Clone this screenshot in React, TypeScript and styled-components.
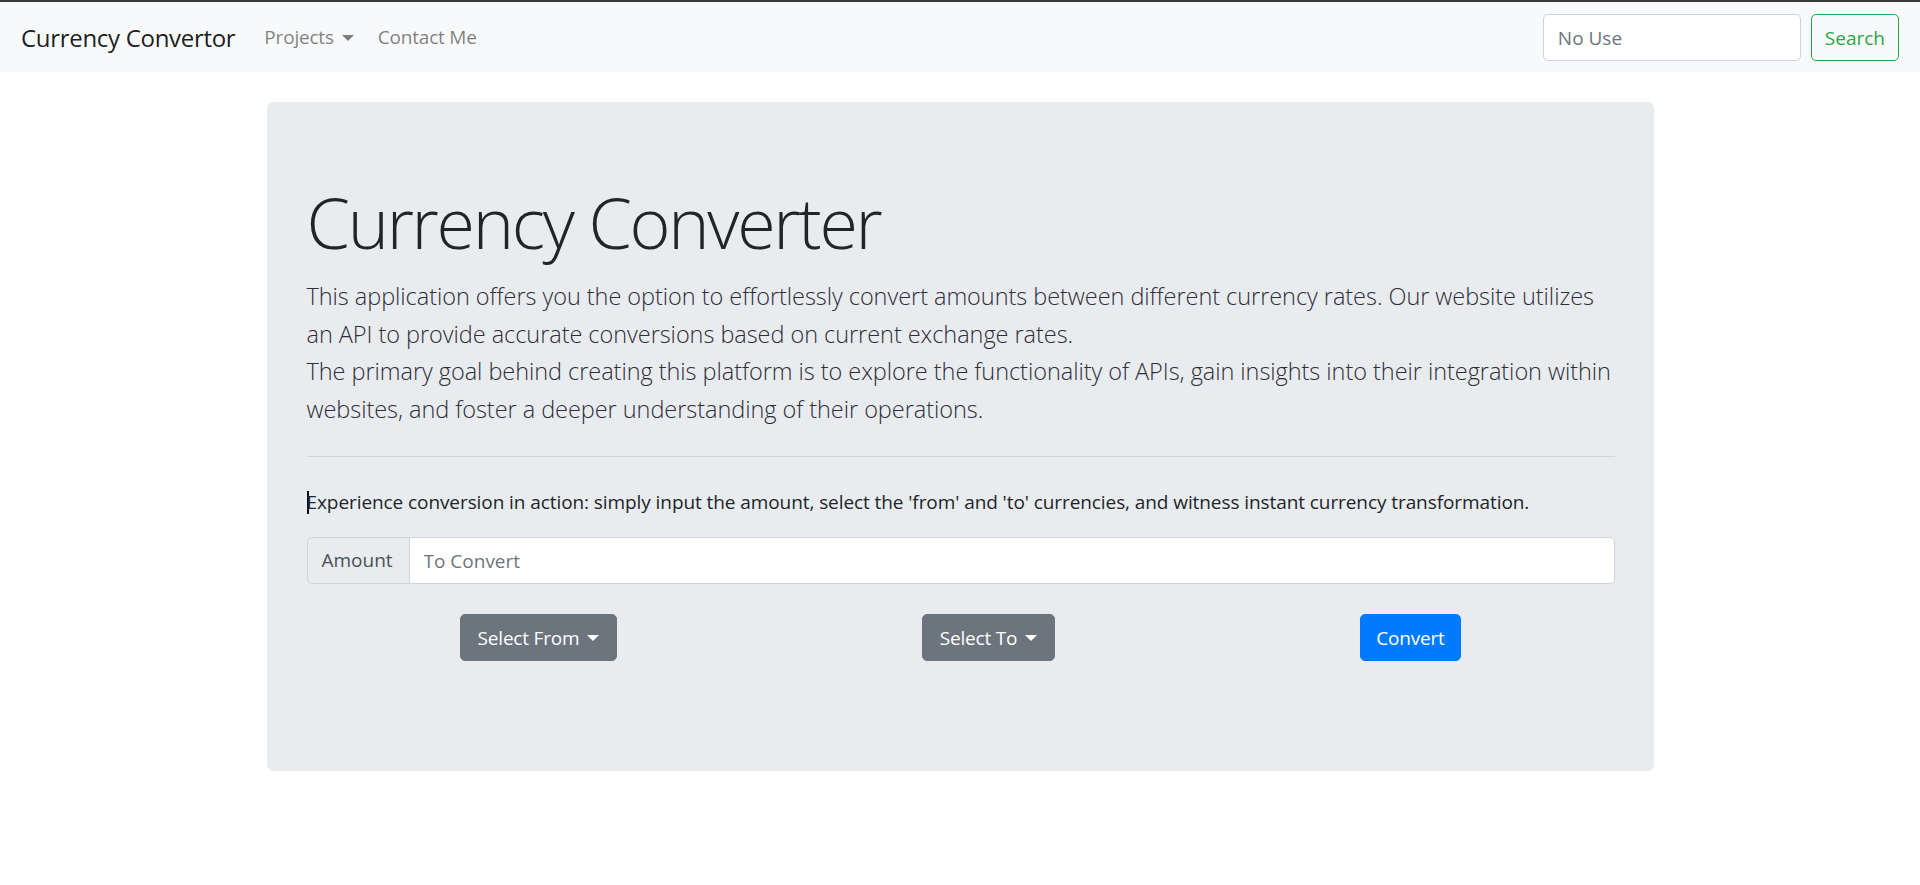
import React from "react";
import styled, { createGlobalStyle } from "styled-components";

const Global = createGlobalStyle`
  html, body { margin: 0; padding: 0; background: #fff; }
  body {
    font-family: "Open Sans", "Noto Sans", "Liberation Sans", sans-serif;
    font-size: 19.6px;
    line-height: 1.5;
    color: #212529;
  }
  * { box-sizing: border-box; }
`;

const Navbar = styled.nav`
  display: flex;
  align-items: center;
  justify-content: space-between;
  height: 72px;
  padding: 1px 21px 0 21px;
  background: #f8f9fa;
  border-top: 2px solid #3a3a3a;
`;

const NavLeft = styled.div`
  display: flex;
  align-items: center;
`;

const Brand = styled.a`
  font-size: 24px;
  color: rgba(0, 0, 0, 0.9);
  text-decoration: none;
  margin-right: 17px;
  letter-spacing: -0.3px;
`;

const NavLink = styled.a`
  display: inline-flex;
  align-items: center;
  font-size: 19px;
  color: rgba(0, 0, 0, 0.5);
  text-decoration: none;
  padding: 0 12px;
  letter-spacing: -0.2px;
`;

const Caret = styled.span<{ $color?: string }>`
  display: inline-block;
  margin-left: 8px;
  width: 0;
  height: 0;
  border-top: 6px solid ${(p) => p.$color || "currentColor"};
  border-left: 6px solid transparent;
  border-right: 6px solid transparent;
`;

const SearchForm = styled.form`
  display: flex;
  align-items: center;
  gap: 10px;
`;

const TextInput = styled.input`
  width: 258px;
  height: 47px;
  padding: 0 14px;
  font-family: inherit;
  font-size: 19px;
  color: #495057;
  background: #fff;
  border: 1px solid #ced4da;
  border-radius: 5px;
  outline: none;
  &::placeholder { color: #6c757d; }
`;

const OutlineButton = styled.button`
  height: 47px;
  padding: 0 13px;
  font-family: inherit;
  font-size: 19px;
  color: #28a745;
  background: transparent;
  border: 1px solid #28a745;
  border-radius: 5px;
`;

const Main = styled.main`
  display: flex;
  justify-content: center;
  padding-top: 30px;
`;

const Jumbotron = styled.section`
  width: 1387px;
  height: 669px;
  background: #e9ecef;
  border-radius: 6px;
  padding: 78px 39px 0 40px;
`;

const Display = styled.h1`
  margin: 0 0 14px 0;
  font-size: 70px;
  font-weight: 300;
  line-height: 1.2;
  letter-spacing: -2.3px;
  color: #212529;
`;

const Lead = styled.p`
  margin: 0;
  font-size: 23.5px;
  font-weight: 300;
  line-height: 37.5px;
  letter-spacing: -0.05px;
  color: #2f2d3a;
`;

const Divider = styled.hr`
  margin: 28px 0 29px 0;
  border: 0;
  border-top: 1px solid rgba(0, 0, 0, 0.1);
`;

const Note = styled.p`
  margin: 0 0 18px 0;
  font-size: 19px;
  line-height: 33px;
  letter-spacing: -0.08px;
  color: #212529;
`;

const TextCaret = styled.span`
  display: inline-block;
  width: 2px;
  height: 23px;
  margin-right: -2px;
  vertical-align: -5px;
  background: #111;
`;

const InputGroup = styled.div`
  display: flex;
  height: 47px;
`;

const Addon = styled.span`
  display: flex;
  align-items: center;
  padding: 0 14px 0 14px;
  width: 103px;
  font-size: 19px;
  color: #495057;
  background: #e9ecef;
  border: 1px solid #ced4da;
  border-radius: 5px 0 0 5px;
`;

const WideInput = styled.input`
  flex: 1;
  min-width: 0;
  padding: 0 14px;
  font-family: inherit;
  font-size: 19px;
  color: #495057;
  background: #fff;
  border: 1px solid #ced4da;
  border-left: 0;
  border-radius: 0 5px 5px 0;
  outline: none;
  &::placeholder { color: #6c757d; }
`;

const ButtonRow = styled.div`
  display: grid;
  grid-template-columns: 464px 436px 408px;
  margin-top: 30px;
`;

const Cell = styled.div`
  display: flex;
  justify-content: center;
`;

const SolidButton = styled.button<{ $variant: "secondary" | "primary" }>`
  display: inline-flex;
  align-items: center;
  height: 47px;
  padding: 0 ${(p) => (p.$variant === "primary" ? 15 : 17)}px;
  font-family: inherit;
  font-size: 19px;
  color: #fff;
  background: ${(p) => (p.$variant === "primary" ? "#007bff" : "#6c757d")};
  border: 1px solid ${(p) => (p.$variant === "primary" ? "#007bff" : "#6c757d")};
  border-radius: 5px;
  letter-spacing: -0.2px;
`;

export default function App() {
  return (
    <>
      <Global />
      <Navbar>
        <NavLeft>
          <Brand href="#">Currency Convertor</Brand>
          <NavLink href="#">
            Projects
            <Caret />
          </NavLink>
          <NavLink href="#">Contact Me</NavLink>
        </NavLeft>
        <SearchForm onSubmit={(e) => e.preventDefault()}>
          <TextInput placeholder="No Use" />
          <OutlineButton type="button">Search</OutlineButton>
        </SearchForm>
      </Navbar>
      <Main>
        <Jumbotron>
          <Display>Currency Converter</Display>
          <Lead>
            This application offers you the option to effortlessly convert amounts between different currency rates. Our website utilizes
            <br />
            an API to provide accurate conversions based on current exchange rates.
            <br />
            The primary goal behind creating this platform is to explore the functionality of APIs, gain insights into their integration within websites, and foster a deeper understanding of their operations.
          </Lead>
          <Divider />
          <Note>
            <TextCaret />
            Experience conversion in action: simply input the amount, select the 'from' and 'to' currencies, and witness instant currency transformation.
          </Note>
          <InputGroup>
            <Addon>Amount</Addon>
            <WideInput placeholder="To Convert" />
          </InputGroup>
          <ButtonRow>
            <Cell>
              <SolidButton $variant="secondary">
                Select From
                <Caret />
              </SolidButton>
            </Cell>
            <Cell>
              <SolidButton $variant="secondary">
                Select To
                <Caret />
              </SolidButton>
            </Cell>
            <Cell>
              <SolidButton $variant="primary">Convert</SolidButton>
            </Cell>
          </ButtonRow>
        </Jumbotron>
      </Main>
    </>
  );
}
